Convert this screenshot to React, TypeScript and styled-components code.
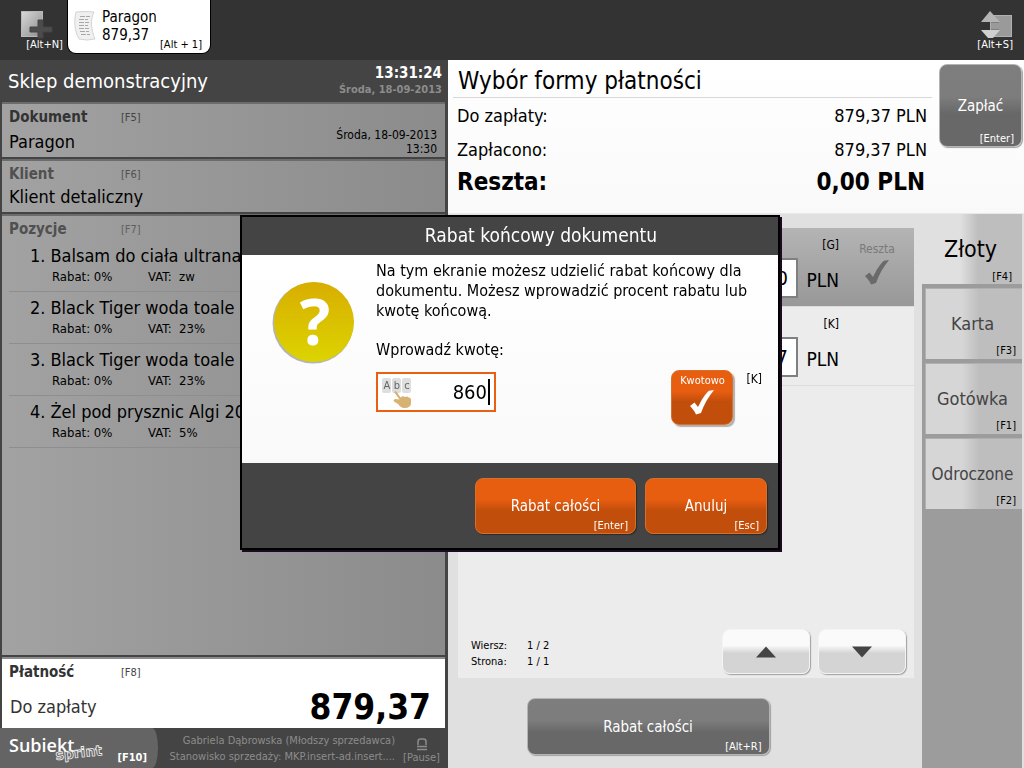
import React, { useState } from "react";
import styled, { createGlobalStyle, css } from "styled-components";

const GlobalStyle = createGlobalStyle`
  *, *::before, *::after { box-sizing: border-box; }
  html, body { margin: 0; }
  body, button, input {
    font-family: "DejaVu Sans Condensed", Tahoma, "DejaVu Sans", sans-serif;
  }
  button { border: 0; padding: 0; background: none; color: inherit; cursor: pointer; text-align: left; }
  h1, h2, h3, p, ol, dl, dd, dt { margin: 0; padding: 0; font-weight: normal; }
  ol { list-style: none; }
  svg { overflow: visible; }
`;

/* ---------- shared ---------- */

const Shortcut = styled.span<{ $color?: string }>`
  font-size: 11px;
  line-height: 13px;
  color: ${(p) => p.$color ?? "#000"};
  white-space: nowrap;
`;

const Screen = styled.div`
  display: flex;
  flex-direction: column;
  min-height: 100vh;
  background: #e0e0e0;
  color: #000;
`;

/* ---------- top bar ---------- */

const TopBar = styled.header`
  display: flex;
  align-items: flex-start;
  height: 60px;
  padding-left: 4px;
  padding-right: 10px;
  background: #333;
`;

const ToolButton = styled.button`
  display: flex;
  flex-direction: column;
  align-items: flex-end;
  width: 60px;
  padding-top: 10px;
  svg { display: block; margin-right: 12px; }
  ${Shortcut} { margin-right: 1px; }
  &:last-child { margin-left: auto; width: 40px; }
  &:last-child svg { margin-right: 2px; }
`;

const ReceiptTab = styled.button`
  display: flex;
  width: 142px;
  height: 53px;
  margin-left: 4px;
  padding: 8px 8px 2px 7px;
  border-radius: 0 0 8px 8px;
  background: #fff;
  box-shadow: 0 0 0 1px #000;
  color: #000;
`;

const TabText = styled.span`
  display: flex;
  flex: 1;
  flex-direction: column;
  padding-left: 6px;
  font-size: 15px;
  line-height: 18px;
  ${Shortcut} { align-self: flex-end; margin-top: -6px; }
`;

/* ---------- left panel ---------- */

const Main = styled.main`
  display: grid;
  grid-template-columns: 7fr 9fr;
  flex: 1;
`;

const LeftPanel = styled.section`
  display: flex;
  flex-direction: column;
  min-width: 0;
  background: #444;
`;

const ShopHeader = styled.div`
  display: flex;
  justify-content: space-between;
  height: 42px;
  padding: 5px 6px 0 8px;
  color: #fff;
  h1 { font-size: 20px; line-height: 32px; }
`;

const Clock = styled.div`
  text-align: right;
  font-weight: bold;
  font-size: 15px;
  line-height: 17px;
  small { display: block; font-size: 11px; line-height: 16px; color: #8c8c8c; }
`;

const Sections = styled.div`
  display: flex;
  flex: 1;
  flex-direction: column;
  gap: 2px;
  padding: 0 3px 0 2px;
`;

const Section = styled.section<{ $height?: number; $light?: boolean }>`
  display: flex;
  flex-direction: column;
  justify-content: space-between;
  ${(p) => (p.$height ? css`height: ${p.$height}px;` : css`flex: 1;`)}
  padding: 4px 8px 1px 7px;
  border-top: 2px solid ${(p) => (p.$light ? "#8c8c8c" : "#6c6c6c")};
  background: ${(p) => (p.$light ? "#fff" : "linear-gradient(90deg, #a2a2a2, #8b8b8b)")};
`;

const SectionHead = styled.div<{ $color: string }>`
  display: flex;
  align-items: center;
  h2 {
    width: 112px;
    font-size: 15px;
    line-height: 18px;
    font-weight: bold;
    color: ${(p) => p.$color};
  }
`;

const SectionBody = styled.div`
  display: flex;
  justify-content: space-between;
  font-size: 18px;
  line-height: 28px;
`;

const IssueDate = styled.div`
  font-size: 12px;
  line-height: 14px;
  text-align: right;
`;

const ItemList = styled.ol`
  flex: 1;
  padding-top: 2px;
`;

const Item = styled.li`
  height: 52px;
  margin-right: -6px;
  padding-top: 4px;
  padding-left: 21px;
  border-bottom: 1px solid #8e8e8e;
  overflow: hidden;
`;

const ItemName = styled.div`
  display: flex;
  gap: 5px;
  font-size: 18px;
  line-height: 24px;
  white-space: nowrap;
`;

const ItemInfo = styled.div`
  display: grid;
  grid-template-columns: 96px 31px 1fr;
  padding-left: 22px;
  font-size: 13px;
  line-height: 18px;
`;

const Total = styled.div`
  display: flex;
  justify-content: space-between;
  align-items: center;
  padding: 6px 6px 0 1px;
  font-size: 18px;
  line-height: 40px;
  color: #333;
  strong { font-size: 35px; color: #000; }
`;

const StatusBar = styled.footer`
  display: flex;
  height: 40px;
  color: #8c8c8c;
  font-size: 11px;
  line-height: 16px;
`;

const Brand = styled.button`
  display: flex;
  align-items: flex-end;
  justify-content: space-between;
  width: 158px;
  flex: none;
  padding: 0 11px 4px 8px;
  border-radius: 0 6px 6px 0 / 0 20px 20px 0;
  background: #646464;
  ${Shortcut} { font-weight: bold; }
  svg { display: block; }
`;

const Operator = styled.div`
  flex: 1;
  min-width: 0;
  padding-top: 5px;
  padding-left: 8px;
  text-align: right;
  div { overflow: hidden; text-overflow: ellipsis; white-space: nowrap; }
`;

const LockButton = styled.button`
  display: flex;
  flex-direction: column;
  align-items: center;
  width: 53px;
  padding-top: 10px;
`;

/* ---------- right panel ---------- */

const RightPanel = styled.section`
  display: flex;
  flex-direction: column;
  min-width: 0;
  padding-right: 2px;
  background: #e0e0e0;
`;

const Summary = styled.div`
  display: flex;
  align-items: flex-start;
  height: 154px;
  margin-right: -2px;
  border-bottom: 1px solid #e8e8e8;
  background: linear-gradient(#fff, #f9f9f9);
`;

const SummaryText = styled.div`
  flex: 1;
  padding-left: 5px;
  padding-right: 7px;
  h2 {
    height: 38px;
    padding-left: 5px;
    border-bottom: 1px solid #d8d8d8;
    font-size: 24px;
    line-height: 42px;
  }
`;

const Amounts = styled.dl`
  padding: 1px 5px 0 4px;
`;

const Amount = styled.div<{ $strong?: boolean }>`
  display: flex;
  justify-content: space-between;
  padding-right: ${(p) => (p.$strong ? 2 : 0)}px;
  font-size: ${(p) => (p.$strong ? 24 : 18)}px;
  font-weight: ${(p) => (p.$strong ? "bold" : "normal")};
  line-height: ${(p) => (p.$strong ? 30 : 34)}px;
  dt, dd { font-weight: inherit; }
`;

const tones = {
  grey: { fill: "#7e7e7e 0%, #7c7c7c 40%, #686868 60%, #686868 100%", edge: "#b4b4b4", shadow: "#a0a0a0", ink: "#fff" },
  orange: { fill: "#e85e10 0%, #e85e10 38%, #c24e0c 58%, #c24e0c 100%", edge: "#d8702c", shadow: "#2c2c2c", ink: "#fff" },
  light: { fill: "#fafafa 0%, #fafafa 36%, #d4d4d4 54%, #d4d4d4 100%", edge: "#f4f4f4", shadow: "#a0a0a0", ink: "#444" },
};

const PushButton = styled.button<{ $tone: keyof typeof tones; $width: number; $height: number }>`
  position: relative;
  flex: none;
  display: flex;
  align-items: center;
  justify-content: center;
  width: ${(p) => p.$width}px;
  height: ${(p) => p.$height}px;
  border: 1px solid ${(p) => tones[p.$tone].edge};
  border-radius: 8px;
  background: linear-gradient(${(p) => tones[p.$tone].fill});
  box-shadow: 1px 1px 1px ${(p) => tones[p.$tone].shadow};
  color: ${(p) => tones[p.$tone].ink};
  font-size: 15px;
  line-height: 18px;
  ${Shortcut} { position: absolute; right: 7px; bottom: 1px; }
`;

const PayButton = styled(PushButton)`
  margin: 4px 2px 0 0;
`;

const PayArea = styled.div`
  display: grid;
  grid-template-columns: 1fr 100px;
  flex: 1;
`;

const PayColumn = styled.div`
  display: flex;
  flex-direction: column;
  align-items: center;
  padding: 14px 8px 13px 10px;
`;

const DiscountButton = styled(PushButton)`
  margin-right: 76px;
`;

const PayList = styled.div`
  display: flex;
  flex: 1;
  flex-direction: column;
  align-self: stretch;
  margin-bottom: 20px;
  background: #ececec;
`;

const PayRow = styled.div<{ $selected?: boolean }>`
  display: grid;
  grid-template-columns: 1fr 106px 41px 70px;
  height: 79px;
  padding-right: 5px;
  border-bottom: 1px solid #dcdcdc;
  background: ${(p) => (p.$selected ? "linear-gradient(#b4b4b4, #989898)" : "none")};
`;

const PayInput = styled.input`
  grid-column: 2;
  width: 100%;
  height: 40px;
  margin-top: 30px;
  padding: 0 8px;
  border: 2px solid #808080;
  border-radius: 0;
  background: #fff;
  color: #000;
  font-size: 20px;
  text-align: right;
`;

const Currency = styled.div`
  display: flex;
  flex-direction: column;
  align-items: flex-end;
  gap: 17px;
  padding-top: 9px;
  font-size: 19px;
  line-height: 20px;
  white-space: nowrap;
  ${Shortcut} { font-size: 12px; line-height: 16px; }
`;

const Change = styled.button`
  display: flex;
  flex-direction: column;
  align-items: center;
  gap: 2px;
  justify-self: end;
  align-self: start;
  width: 64px;
  padding-top: 14px;
  font-size: 12px;
  line-height: 15px;
  color: #7a7a7a;
`;

const Pager = styled.div`
  display: flex;
  align-items: flex-end;
  gap: 8px;
  margin-top: auto;
  padding: 0 8px 4px 13px;
  dl {
    display: grid;
    grid-template-columns: 56px auto;
    margin-right: auto;
    margin-bottom: 4px;
    font-size: 11px;
    line-height: 16px;
  }
`;

const Methods = styled.nav`
  display: flex;
  flex-direction: column;
  gap: 4px;
  background: #9c9c9c;
`;

const Method = styled.button<{ $active?: boolean; $long?: boolean }>`
  display: flex;
  flex-direction: column;
  align-items: center;
  justify-content: space-between;
  height: ${(p) => (p.$active ? 70 : 71)}px;
  margin-left: ${(p) => (p.$active ? 0 : 3)}px;
  padding: ${(p) => (p.$active ? "22px 3px 1px 0" : "23px 6px 2px 4px")};
  background: linear-gradient(90deg, ${(p) => (p.$active ? "#e0e0e0" : "#d6d6d6")} 38%, #bebebe 56%);
  box-shadow: ${(p) => (p.$active ? "none" : "inset 1px 1px 0 #b0b0b0")};
  color: ${(p) => (p.$active ? "#000" : "#444")};
  font-size: ${(p) => (p.$active ? 23 : p.$long ? 17 : 18)}px;
  line-height: 26px;
  ${Shortcut} { align-self: flex-end; padding-right: ${(p) => (p.$active ? 7 : 0)}px; }
`;

/* ---------- dialog ---------- */

const Overlay = styled.div`
  position: fixed;
  inset: 0;
  display: flex;
  align-items: center;
  justify-content: center;
  padding: 0 4px 4px 0;
`;

const Dialog = styled.form`
  width: 540px;
  border: 2px solid #000;
  background: #444;
  box-shadow: 2px 2px 0 #1c0a20;
`;

const DialogTitle = styled.h2`
  height: 38px;
  padding-left: 62px;
  font-size: 19px;
  line-height: 36px;
  text-align: center;
  color: #fff;
`;

const DialogBody = styled.div`
  display: grid;
  grid-template-columns: 134px 1fr;
  height: 208px;
  padding: 6px 16px 0 0;
  background: linear-gradient(#fff, #f9f9f9);
  > svg { margin: 19px 0 0 28px; }
`;

const Message = styled.div`
  font-size: 16px;
  line-height: 20px;
  p { height: 79px; }
  label { display: block; }
`;

const EntryRow = styled.div`
  display: flex;
  align-items: flex-start;
  justify-content: space-between;
  padding-top: 10px;
`;

const AmountField = styled.div`
  display: flex;
  align-items: center;
  width: 120px;
  height: 40px;
  margin-top: 2px;
  padding: 0 4px 0 3px;
  border: 2px solid #e86010;
  background: #fff;
  input {
    flex: 1;
    min-width: 0;
    padding: 0;
    border: 0;
    outline: 0;
    background: none;
    font-size: 20px;
    text-align: right;
  }
`;

const Caret = styled.span`
  width: 2px;
  height: 26px;
  margin-left: 1px;
  background: #000;
`;

const ToggleGroup = styled.div`
  display: flex;
  gap: 13px;
  ${PushButton} {
    flex-direction: column;
    justify-content: flex-start;
    padding-top: 2px;
    font-size: 11px;
    line-height: 16px;
    box-shadow: 2px 2px 1px #b0b0b0;
  }
  > ${Shortcut} { font-size: 12px; line-height: 18px; }
`;

const DialogFooter = styled.div`
  display: flex;
  justify-content: flex-end;
  gap: 9px;
  height: 85px;
  padding: 15px 11px 0 0;
`;

/* ---------- drawings ---------- */

const NewDocIcon = () => (
  <svg width="34" height="28" viewBox="0 0 34 28" aria-hidden="true">
    <defs>
      <linearGradient id="doc" x1="0" y1="0" x2="1" y2="1">
        <stop offset="0" stopColor="#d8d8d8" />
        <stop offset="1" stopColor="#8c8c8c" />
      </linearGradient>
    </defs>
    <rect x="3.500" y="1.500" width="21" height="25" fill="url(#doc)" stroke="#b8b8b8" />
    <path d="M20 10h5v7h9v5h-9v6h-5v-6h-8v-5h8z" fill="#4c4c4c" stroke="#444" strokeLinejoin="round" />
  </svg>
);

const ReceiptIcon = () => (
  <svg width="21" height="34" viewBox="0 0 21 34" aria-hidden="true">
    <path d="M1 4q9-1 18 0c-4 8-3 17 1 27q-8 2-16 0C-1 22-1 12 1 4z" fill="#f0f0f0" stroke="#d4d4d4" />
    <path d="M5 8.500h10M4 11.500h9M4 14.500h10M4 17.500h9M4 20.500h10M5 23.500h9M6 26.500h9" stroke="#a8a8a8" strokeDasharray="5 1 4 1" />
  </svg>
);

const SwitchIcon = () => (
  <svg width="32" height="28" viewBox="0 0 32 28" aria-hidden="true">
    <rect x="10.500" y="5.500" width="21" height="21" fill="#9a9a9a" stroke="#b0b0b0" />
    <path d="M11 12.500h8M11 19.500h8" stroke="#808080" />
    <path d="M10 1l10 11H1z" fill="#b4b4b4" />
    <path d="M1 20h19L13 28H8z" fill="#d0d0d0" />
  </svg>
);

const LockIcon = () => (
  <svg width="12" height="13" viewBox="0 0 12 13" aria-hidden="true">
    <path d="M2 7V3.500Q2 1 4.500 1h3Q10 1 10 3.500V7" fill="none" stroke="#8c8c8c" strokeWidth="1.500" />
    <path d="M1 8.500h10M1 11.500h10" stroke="#8c8c8c" strokeWidth="1.500" />
  </svg>
);

const CheckIcon = ({ color }: { color: string }) => (
  <svg width="26" height="26" viewBox="0 0 26 26" aria-hidden="true">
    <path d="M1 17L5.500 13.500L9 18C12.500 11 16 5 20 1.800L25 1C19.500 7.500 15 15.500 12 24L7 25.500C5.500 22 3.500 19.500 1 17z" fill={color} />
  </svg>
);

const BrandLogo = () => (
  <svg width="96" height="36" viewBox="0 0 96 36" role="img" aria-label="Subiekt Sprint">
    <text x="1" y="24" fontSize="18" fontFamily="Open Sans, Noto Sans, sans-serif" fontWeight="600" fill="#fff">Subiekt</text>
    <text x="48" y="32" fontSize="14" fontFamily="DejaVu Sans, sans-serif" fontWeight="bold" fill="#646464" stroke="#f0f0f0" strokeWidth="0.800" transform="rotate(-6 48 32)">sprint</text>
  </svg>
);

const QuestionIcon = () => (
  <svg width="86" height="86" viewBox="0 0 86 86" aria-hidden="true">
    <defs>
      <linearGradient id="gold" x1="0" y1="0" x2="0" y2="1">
        <stop offset="0" stopColor="#d8ae00" />
        <stop offset="1" stopColor="#dcd400" />
      </linearGradient>
    </defs>
    <circle cx="43" cy="43" r="40.500" fill="#b4b4b4" />
    <circle cx="44" cy="42" r="40" fill="url(#gold)" />
    <text x="45" y="65" textAnchor="middle" fontSize="64" fontWeight="bold" fontFamily="Open Sans, sans-serif" fill="#fff">?</text>
  </svg>
);

const KeyboardIcon = () => (
  <svg width="32" height="32" viewBox="0 0 32 32" aria-hidden="true">
    <g fill="#dedede">
      <rect x="1" y="2" width="9" height="15" rx="2" />
      <rect x="11" y="2" width="9" height="15" rx="2" />
      <rect x="21" y="2" width="9" height="15" rx="2" />
    </g>
    <g fontSize="11" fill="#666" textAnchor="middle">
      <text x="6" y="13">A</text>
      <text x="16" y="13">b</text>
      <text x="26" y="13">c</text>
    </g>
    <path d="M13 16c1-1 2.500-1 3.500 1l3 4.500c2-1.500 3-1.500 4.500-.5c2-1 3-.5 3.500.5c1.500-.3 2.500.5 2.500 2.500v4c-1 3.500-4 4-6.500 4c-3 0-5-2-6.500-4l-4-2.500c-1-1 0-2.500 1.500-2.500l4 .5z" fill="#d8b272" />
  </svg>
);

const Triangle = ({ down }: { down?: boolean }) => (
  <svg width="20" height="12" viewBox="0 0 20 12" aria-hidden="true">
    <path d={down ? "M0 0.500h20L10 11.500z" : "M10 0.500l10 11H0z"} fill="#444" />
  </svg>
);

/* ---------- data ---------- */

const items = [
  { name: "Balsam do ciała ultrana", vat: "zw" },
  { name: "Black Tiger woda toale", vat: "23%" },
  { name: "Black Tiger woda toale", vat: "23%" },
  { name: "Żel pod prysznic Algi 20", vat: "5%" },
];

const methods = [
  { name: "Złoty", hotkey: "[F4]", active: true },
  { name: "Karta", hotkey: "[F3]" },
  { name: "Gotówka", hotkey: "[F1]" },
  { name: "Odroczone", hotkey: "[F2]" },
];

export default function App() {
  const [amount, setAmount] = useState("860");

  return (
    <>
      <GlobalStyle />
      <Screen>
        <TopBar>
          <ToolButton type="button" aria-label="Nowy dokument">
            <NewDocIcon />
            <Shortcut $color="#fff">[Alt+N]</Shortcut>
          </ToolButton>
          <ReceiptTab type="button">
            <ReceiptIcon />
            <TabText>
              <span>Paragon</span>
              <span>879,37</span>
              <Shortcut>[Alt + 1]</Shortcut>
            </TabText>
          </ReceiptTab>
          <ToolButton type="button" aria-label="Przełącz">
            <SwitchIcon />
            <Shortcut $color="#fff">[Alt+S]</Shortcut>
          </ToolButton>
        </TopBar>

        <Main>
          <LeftPanel>
            <ShopHeader>
              <h1>Sklep demonstracyjny</h1>
              <Clock>
                13:31:24
                <small>Środa, 18-09-2013</small>
              </Clock>
            </ShopHeader>
            <Sections>
              <Section $height={55}>
                <SectionHead $color="#333">
                  <h2>Dokument</h2>
                  <Shortcut $color="#444">[F5]</Shortcut>
                </SectionHead>
                <SectionBody>
                  <span>Paragon</span>
                  <IssueDate>
                    Środa, 18-09-2013
                    <br />
                    13:30
                  </IssueDate>
                </SectionBody>
              </Section>
              <Section $height={53}>
                <SectionHead $color="#505050">
                  <h2>Klient</h2>
                  <Shortcut $color="#505050">[F6]</Shortcut>
                </SectionHead>
                <SectionBody>Klient detaliczny</SectionBody>
              </Section>
              <Section>
                <SectionHead $color="#505050">
                  <h2>Pozycje</h2>
                  <Shortcut $color="#606060">[F7]</Shortcut>
                </SectionHead>
                <ItemList>
                  {items.map((item, i) => (
                    <Item key={i}>
                      <ItemName>
                        <span>{i + 1}.</span>
                        <span>{item.name}</span>
                      </ItemName>
                      <ItemInfo>
                        <span>Rabat: 0%</span>
                        <span>VAT:</span>
                        <span>{item.vat}</span>
                      </ItemInfo>
                    </Item>
                  ))}
                </ItemList>
              </Section>
              <Section $height={71} $light>
                <SectionHead $color="#333">
                  <h2>Płatność</h2>
                  <Shortcut $color="#444">[F8]</Shortcut>
                </SectionHead>
                <Total>
                  <span>Do zapłaty</span>
                  <strong>879,37</strong>
                </Total>
              </Section>
            </Sections>
            <StatusBar>
              <Brand type="button">
                <BrandLogo />
                <Shortcut $color="#fff">[F10]</Shortcut>
              </Brand>
              <Operator>
                <div>Gabriela Dąbrowska (Młodszy sprzedawca)</div>
                <div>Stanowisko sprzedaży: MKP.insert-ad.insert....</div>
              </Operator>
              <LockButton type="button" aria-label="Zablokuj">
                <LockIcon />
                <Shortcut $color="#8c8c8c">[Pause]</Shortcut>
              </LockButton>
            </StatusBar>
          </LeftPanel>

          <RightPanel>
            <Summary>
              <SummaryText>
                <h2>Wybór formy płatności</h2>
                <Amounts>
                  <Amount>
                    <dt>Do zapłaty:</dt>
                    <dd>879,37 PLN</dd>
                  </Amount>
                  <Amount>
                    <dt>Zapłacono:</dt>
                    <dd>879,37 PLN</dd>
                  </Amount>
                  <Amount $strong>
                    <dt>Reszta:</dt>
                    <dd>0,00 PLN</dd>
                  </Amount>
                </Amounts>
              </SummaryText>
              <PayButton type="button" $tone="grey" $width={83} $height={83}>
                Zapłać
                <Shortcut $color="#fff">[Enter]</Shortcut>
              </PayButton>
            </Summary>
            <PayArea>
              <PayColumn>
                <PayList>
                  <PayRow $selected>
                    <PayInput aria-label="Gotówka" defaultValue="0,00" />
                    <Currency>
                      <Shortcut>[G]</Shortcut>
                      <span>PLN</span>
                    </Currency>
                    <Change type="button">
                      Reszta
                      <CheckIcon color="#6a6a6a" />
                    </Change>
                  </PayRow>
                  <PayRow>
                    <PayInput aria-label="Karta" defaultValue="879,37" />
                    <Currency>
                      <Shortcut>[K]</Shortcut>
                      <span>PLN</span>
                    </Currency>
                  </PayRow>
                  <Pager>
                    <dl>
                      <dt>Wiersz:</dt>
                      <dd>1 / 2</dd>
                      <dt>Strona:</dt>
                      <dd>1 / 1</dd>
                    </dl>
                    <PushButton type="button" $tone="light" $width={88} $height={45} aria-label="W górę">
                      <Triangle />
                    </PushButton>
                    <PushButton type="button" $tone="light" $width={88} $height={45} aria-label="W dół">
                      <Triangle down />
                    </PushButton>
                  </Pager>
                </PayList>
                <DiscountButton type="button" $tone="grey" $width={243} $height={57}>
                  Rabat całości
                  <Shortcut $color="#fff">[Alt+R]</Shortcut>
                </DiscountButton>
              </PayColumn>
              <Methods>
                {methods.map((m) => (
                  <Method key={m.name} type="button" $active={m.active} $long={m.name.length > 8}>
                    {m.name}
                    <Shortcut>{m.hotkey}</Shortcut>
                  </Method>
                ))}
              </Methods>
            </PayArea>
          </RightPanel>
        </Main>
      </Screen>

      <Overlay>
        <Dialog role="dialog" aria-labelledby="dialog-title" onSubmit={(e) => e.preventDefault()}>
          <DialogTitle id="dialog-title">Rabat końcowy dokumentu</DialogTitle>
          <DialogBody>
            <QuestionIcon />
            <Message>
              <p>
                Na tym ekranie możesz udzielić rabat końcowy dla dokumentu. Możesz wprowadzić procent rabatu lub kwotę
                końcową.
              </p>
              <label htmlFor="amount">Wprowadź kwotę:</label>
              <EntryRow>
                <AmountField>
                  <KeyboardIcon />
                  <input id="amount" value={amount} onChange={(e) => setAmount(e.target.value)} />
                  <Caret />
                </AmountField>
                <ToggleGroup>
                  <PushButton type="button" $tone="orange" $width={62} $height={55}>
                    Kwotowo
                    <CheckIcon color="#fff" />
                  </PushButton>
                  <Shortcut>[K]</Shortcut>
                </ToggleGroup>
              </EntryRow>
            </Message>
          </DialogBody>
          <DialogFooter>
            <PushButton type="submit" $tone="orange" $width={161} $height={56}>
              Rabat całości
              <Shortcut $color="#fff">[Enter]</Shortcut>
            </PushButton>
            <PushButton type="button" $tone="orange" $width={122} $height={56}>
              Anuluj
              <Shortcut $color="#fff">[Esc]</Shortcut>
            </PushButton>
          </DialogFooter>
        </Dialog>
      </Overlay>
    </>
  );
}
